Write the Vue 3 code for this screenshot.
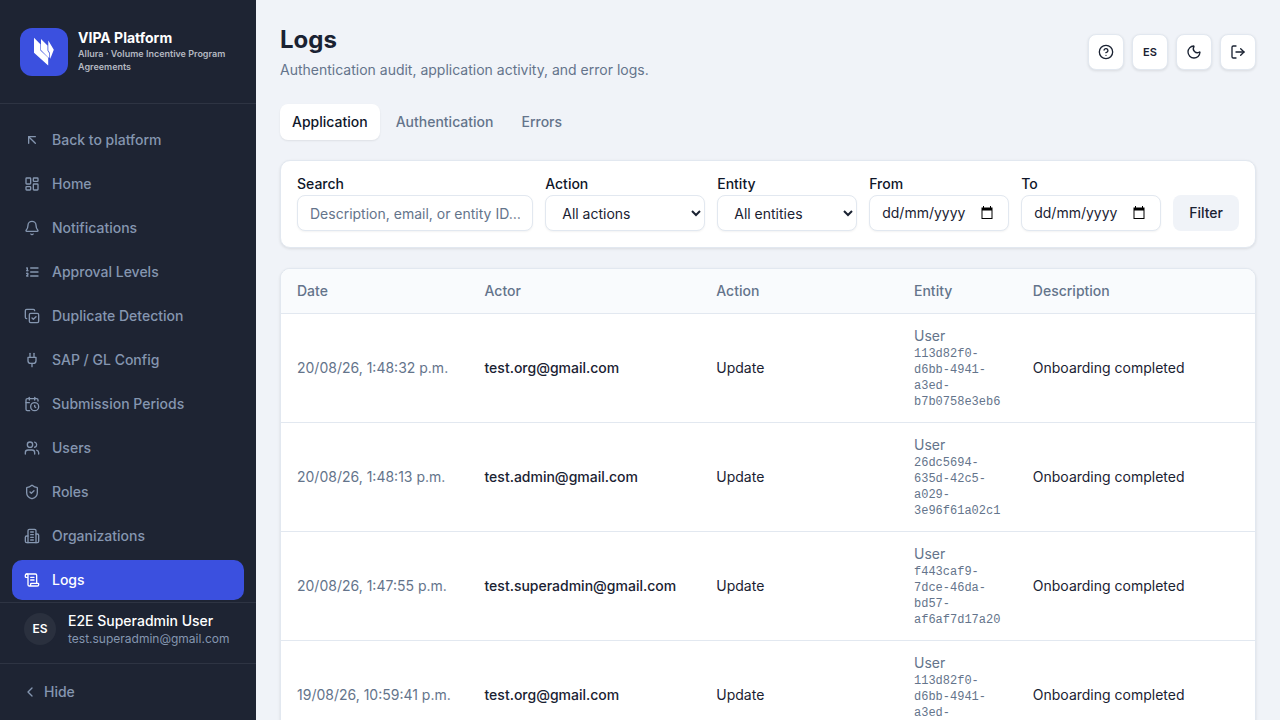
<script setup>
const icons = {
  back: '<path d="M7 17V7h10"/><path d="M17 17 7 7"/>',
  home: '<rect width="7" height="9" x="3" y="3" rx="1"/><rect width="7" height="5" x="14" y="3" rx="1"/><rect width="7" height="9" x="14" y="12" rx="1"/><rect width="7" height="5" x="3" y="16" rx="1"/>',
  bell: '<path d="M10.268 21a2 2 0 0 0 3.464 0"/><path d="M3.262 15.326A1 1 0 0 0 4 17h16a1 1 0 0 0 .74-1.673C19.41 13.956 18 12.499 18 8A6 6 0 0 0 6 8c0 4.499-1.411 5.956-2.738 7.326"/>',
  levels: '<path d="M10 6h11"/><path d="M10 12h11"/><path d="M10 18h11"/><path d="M4 6h1v4"/><path d="M4 10h2"/><path d="M6 18H4c0-1 2-2 2-3s-1-1.500-2-1"/>',
  copy: '<path d="m12 15 2 2 4-4"/><rect width="14" height="14" x="8" y="8" rx="2" ry="2"/><path d="M4 16c-1.1 0-2-.9-2-2V4c0-1.1.9-2 2-2h10c1.1 0 2 .9 2 2"/>',
  plug: '<path d="M12 22v-5"/><path d="M9 8V2"/><path d="M15 8V2"/><path d="M18 8v5a4 4 0 0 1-4 4h-4a4 4 0 0 1-4-4V8Z"/>',
  calendar: '<path d="M16 14v2.2l1.6 1"/><path d="M16 2v4"/><path d="M21 7.5V6a2 2 0 0 0-2-2H5a2 2 0 0 0-2 2v14a2 2 0 0 0 2 2h3.5"/><path d="M3 10h5"/><path d="M8 2v4"/><circle cx="16" cy="16" r="6"/>',
  users: '<path d="M16 21v-2a4 4 0 0 0-4-4H6a4 4 0 0 0-4 4v2"/><path d="M16 3.128a4 4 0 0 1 0 7.744"/><path d="M22 21v-2a4 4 0 0 0-3-3.87"/><circle cx="9" cy="7" r="4"/>',
  shield: '<path d="M20 13c0 5-3.5 7.5-7.66 8.95a1 1 0 0 1-.67-.01C7.5 20.5 4 18 4 13V6a1 1 0 0 1 1-1c2 0 4.5-1.2 6.24-2.72a1.17 1.17 0 0 1 1.52 0C14.51 3.81 17 5 19 5a1 1 0 0 1 1 1z"/><path d="m9 12 2 2 4-4"/>',
  building: '<path d="M6 22V4a2 2 0 0 1 2-2h8a2 2 0 0 1 2 2v18Z"/><path d="M6 12H4a2 2 0 0 0-2 2v6a2 2 0 0 0 2 2h2"/><path d="M18 9h2a2 2 0 0 1 2 2v9a2 2 0 0 1-2 2h-2"/><path d="M10 6h4"/><path d="M10 10h4"/><path d="M10 14h4"/><path d="M10 18h4"/>',
  scroll: '<path d="M15 12h-5"/><path d="M15 8h-5"/><path d="M19 17V5a2 2 0 0 0-2-2H4"/><path d="M8 21h12a2 2 0 0 0 2-2v-1a1 1 0 0 0-1-1H11a1 1 0 0 0-1 1v1a2 2 0 1 1-4 0V5a2 2 0 1 0-4 0v2a1 1 0 0 0 1 1h3"/>',
}

const nav = [
  { label: 'Back to platform', icon: 'back' },
  { label: 'Home', icon: 'home' },
  { label: 'Notifications', icon: 'bell' },
  { label: 'Approval Levels', icon: 'levels' },
  { label: 'Duplicate Detection', icon: 'copy' },
  { label: 'SAP / GL Config', icon: 'plug' },
  { label: 'Submission Periods', icon: 'calendar' },
  { label: 'Users', icon: 'users' },
  { label: 'Roles', icon: 'shield' },
  { label: 'Organizations', icon: 'building' },
  { label: 'Logs', icon: 'scroll', active: true },
]

const dates = [
  { id: 'from', label: 'From' },
  { id: 'to', label: 'To' },
]

const rows = [
  { date: '20/08/26, 1:48:32 p.m.', actor: 'test.org@gmail.com', id: '113d82f0-d6bb-4941-a3ed-b7b0758e3eb6' },
  { date: '20/08/26, 1:48:13 p.m.', actor: 'test.admin@gmail.com', id: '26dc5694-635d-42c5-a029-3e96f61a02c1' },
  { date: '20/08/26, 1:47:55 p.m.', actor: 'test.superadmin@gmail.com', id: 'f443caf9-7dce-46da-bd57-af6af7d17a20' },
  { date: '19/08/26, 10:59:41 p.m.', actor: 'test.org@gmail.com', id: '113d82f0-d6bb-4941-a3ed-b7b0758e3eb6' },
]
</script>

<template>
  <div class="shell">
    <aside class="sidebar">
      <div class="brand">
        <div class="logo">
          <svg viewBox="0 0 48 48" aria-hidden="true">
            <path d="M14 9.700l6.400 6.500v6.300l7.800 7.300v7.700L14 24.700z" />
            <path d="M21 11l6.500 6.500v5l1.800 3v4.500l-1.500-1L21 22z" />
            <path d="M28.300 12.500l5.500 9.200-3.600 9.300-.3-6-1.600-2.500z" />
          </svg>
        </div>
        <div>
          <p class="brand-name">VIPA Platform</p>
          <p class="brand-sub">Allura · Volume Incentive Program Agreements</p>
        </div>
      </div>
      <nav class="nav" aria-label="Main">
        <a v-for="item in nav" :key="item.label" href="#" class="nav-item" :class="{ active: item.active }">
          <svg class="icon" viewBox="0 0 24 24" aria-hidden="true" v-html="icons[item.icon]"></svg>
          <span>{{ item.label }}</span>
        </a>
      </nav>
      <div class="account">
        <span class="avatar">ES</span>
        <div>
          <p class="account-name">E2E Superadmin User</p>
          <p class="account-mail">test.superadmin@gmail.com</p>
        </div>
      </div>
      <div class="collapse">
        <button type="button" class="hide">
          <svg class="icon" viewBox="0 0 24 24" aria-hidden="true"><path d="m15 18-6-6 6-6" /></svg>
          Hide
        </button>
      </div>
    </aside>

    <main class="main">
      <header class="head">
        <div>
          <h1>Logs</h1>
          <p class="lead">Authentication audit, application activity, and error logs.</p>
        </div>
        <div class="tools">
          <button type="button" aria-label="Help">
            <svg class="icon" viewBox="0 0 24 24"><circle cx="12" cy="12" r="10" /><path d="M9.09 9a3 3 0 0 1 5.83 1c0 2-3 3-3 3" /><path d="M12 17h.01" /></svg>
          </button>
          <button type="button" class="lang">ES</button>
          <button type="button" aria-label="Dark mode">
            <svg class="icon" viewBox="0 0 24 24"><path d="M20.985 12.486a9 9 0 1 1-9.473-9.472c.405-.022.617.46.402.803a6 6 0 0 0 8.268 8.268c.344-.215.825-.004.803.401" /></svg>
          </button>
          <button type="button" aria-label="Sign out">
            <svg class="icon" viewBox="0 0 24 24"><path d="m16 17 5-5-5-5" /><path d="M21 12H9" /><path d="M9 21H5a2 2 0 0 1-2-2V5a2 2 0 0 1 2-2h4" /></svg>
          </button>
        </div>
      </header>

      <div class="tabs" role="tablist">
        <button type="button" role="tab" aria-selected="true" class="selected">Application</button>
        <button type="button" role="tab" aria-selected="false">Authentication</button>
        <button type="button" role="tab" aria-selected="false">Errors</button>
      </div>

      <form class="card filters" @submit.prevent>
        <div class="field grow">
          <label for="search">Search</label>
          <input id="search" type="text" placeholder="Description, email, or entity ID…" />
        </div>
        <div class="field wide">
          <label for="action">Action</label>
          <select id="action"><option>All actions</option></select>
        </div>
        <div class="field">
          <label for="entity">Entity</label>
          <select id="entity"><option>All entities</option></select>
        </div>
        <div v-for="d in dates" :key="d.id" class="field">
          <label :for="d.id">{{ d.label }}</label>
          <div class="date-box">
            <input :id="d.id" type="text" inputmode="numeric" placeholder="dd/mm/yyyy" />
            <button type="button" :aria-label="'Pick date: ' + d.label">
              <svg viewBox="0 0 12 14" aria-hidden="true"><path d="M2 0h1v1.500h6V0h1v1.500h1.500V13H.5V1.500H2zM1.500 4.500V12h9V4.500z" fill-rule="evenodd" /></svg>
            </button>
          </div>
        </div>
        <button type="submit" class="apply">Filter</button>
      </form>

      <div class="card table-card">
        <table>
          <colgroup>
            <col class="c-date" /><col class="c-actor" /><col class="c-action" /><col class="c-entity" /><col />
          </colgroup>
          <thead>
            <tr><th>Date</th><th>Actor</th><th>Action</th><th>Entity</th><th>Description</th></tr>
          </thead>
          <tbody>
            <tr v-for="row in rows" :key="row.date">
              <td class="muted">{{ row.date }}</td>
              <td class="actor">{{ row.actor }}</td>
              <td>Update</td>
              <td class="muted">User<span class="uuid">{{ row.id }}</span></td>
              <td>Onboarding completed</td>
            </tr>
          </tbody>
        </table>
      </div>
    </main>
  </div>
</template>

<style>
body { margin: 0; background: #f0f3f8; }
</style>

<style scoped>
* { box-sizing: border-box; }
.shell {
  display: flex;
  height: 100vh;
  overflow: hidden;
  font: 14px/20px Inter, "Liberation Sans", sans-serif;
  color: #1a2232;
  background: #f0f3f8;
}
p, h1 { margin: 0; }
button, input, select { font: inherit; color: inherit; }
button { border: 0; cursor: pointer; }
.icon {
  width: 16px;
  height: 16px;
  flex: none;
  fill: none;
  stroke: currentColor;
  stroke-width: 2;
  stroke-linecap: round;
  stroke-linejoin: round;
}

.sidebar {
  width: 256px;
  flex: none;
  display: flex;
  flex-direction: column;
  background: #1e2433;
  color: #8596b0;
}
.brand {
  display: flex;
  gap: 10px;
  padding: 28px 20px 27px;
  border-bottom: 1px solid #2e3443;
}
.logo { width: 48px; height: 48px; flex: none; border-radius: 12px; background: #3b50df; }
.logo svg { display: block; fill: #fff; }
.brand-name { line-height: 19px; font-weight: 700; color: #fff; }
.brand-sub { font-size: 9px; line-height: 13px; font-weight: 600; color: #b4b8c1; }
.nav {
  flex: 1;
  min-height: 0;
  overflow: hidden;
  display: flex;
  flex-direction: column;
  gap: 4px;
  padding: 16px 12px 0;
}
.nav-item {
  flex: none;
  display: flex;
  align-items: center;
  gap: 12px;
  height: 40px;
  padding: 0 12px;
  border-radius: 10px;
  color: inherit;
  font-weight: 500;
  text-decoration: none;
}
.nav-item.active { background: #3b50df; color: #fff; }
.account {
  display: flex;
  align-items: center;
  gap: 12px;
  padding: 8px 24px 16px;
  border-top: 1px solid #2e3443;
}
.avatar {
  width: 32px;
  height: 32px;
  border-radius: 50%;
  background: #2a303e;
  color: #fff;
  font-size: 12px;
  line-height: 32px;
  font-weight: 600;
  text-align: center;
}
.account-name { color: #fff; font-weight: 500; }
.account-mail { font-size: 12px; line-height: 16px; }
.collapse { padding: 12px; border-top: 1px solid #2e3443; }
.hide {
  display: flex;
  align-items: center;
  gap: 6px;
  height: 32px;
  padding: 0 10px;
  background: none;
  font-weight: 500;
}

.main { flex: 1; min-width: 0; padding: 24px; overflow: hidden; }
.head { display: flex; justify-content: space-between; align-items: center; }
h1 { font-size: 24px; line-height: 32px; font-weight: 700; }
.lead { margin-top: 4px; color: #64748b; }
.tools { display: flex; gap: 8px; }
.tools button {
  width: 36px;
  height: 36px;
  display: flex;
  align-items: center;
  justify-content: center;
  padding: 0;
  border: 1px solid #e2e8f0;
  border-radius: 8px;
  background: #fff;
  box-shadow: 0 1px 3px rgba(0, 0, 0, 0.1);
}
.tools .lang { font-size: 11px; font-weight: 600; }
.tabs { display: flex; gap: 4px; margin: 24px 0 20px; }
.tabs button {
  height: 36px;
  padding: 0 12px;
  border-radius: 8px;
  background: none;
  color: #64748b;
  font-weight: 500;
}
.tabs .selected { background: #fff; color: #0f172a; box-shadow: 0 1px 2px rgba(0, 0, 0, 0.08); }

.card {
  border: 1px solid #e2e8f0;
  border-radius: 10px;
  background: #fff;
  box-shadow: 0 1px 3px rgba(0, 0, 0, 0.1);
}
.filters { display: flex; align-items: flex-end; gap: 12px; padding: 16px; margin-bottom: 20px; }
.field { display: flex; flex-direction: column; gap: 4px; width: 140px; flex: none; }
.field.wide { width: 160px; }
.field.grow { flex: 1; min-width: 0; }
.field label { line-height: 14px; font-weight: 500; color: #0f172a; }
.field > input, .field select, .date-box {
  width: 100%;
  height: 36px;
  padding: 0 12px;
  border: 1px solid #e2e8f0;
  border-radius: 8px;
  background: #fff;
  box-shadow: 0 1px 2px rgba(0, 0, 0, 0.05);
}
.field select { padding-right: 0; }
.field input::placeholder { color: #64748b; opacity: 1; }
.date-box { display: flex; align-items: center; }
.date-box input { flex: 1; min-width: 0; padding: 0; border: 0; background: none; }
.date-box input::placeholder { color: #1a2232; }
.date-box button { display: flex; padding: 0 3px; background: none; }
.date-box svg { width: 12px; height: 14px; fill: #000; }
.apply { height: 36px; padding: 0 16px; border-radius: 8px; background: #f0f3f8; font-weight: 500; }

.table-card { overflow: hidden; }
table { width: 100%; table-layout: fixed; border-collapse: collapse; }
.c-date { width: 19.25%; }
.c-actor { width: 23.8%; }
.c-action { width: 20.3%; }
.c-entity { width: 12.2%; }
th, td { padding: 12px 16px; text-align: left; border-bottom: 1px solid #e2e8f0; }
th { background: #f9fbfd; color: #64748b; font-weight: 500; }
td { vertical-align: middle; white-space: nowrap; }
.muted { color: #64748b; }
.actor { font-weight: 500; }
.uuid {
  display: block;
  font: 12px/16px "Liberation Mono", monospace;
  white-space: normal;
}
</style>
